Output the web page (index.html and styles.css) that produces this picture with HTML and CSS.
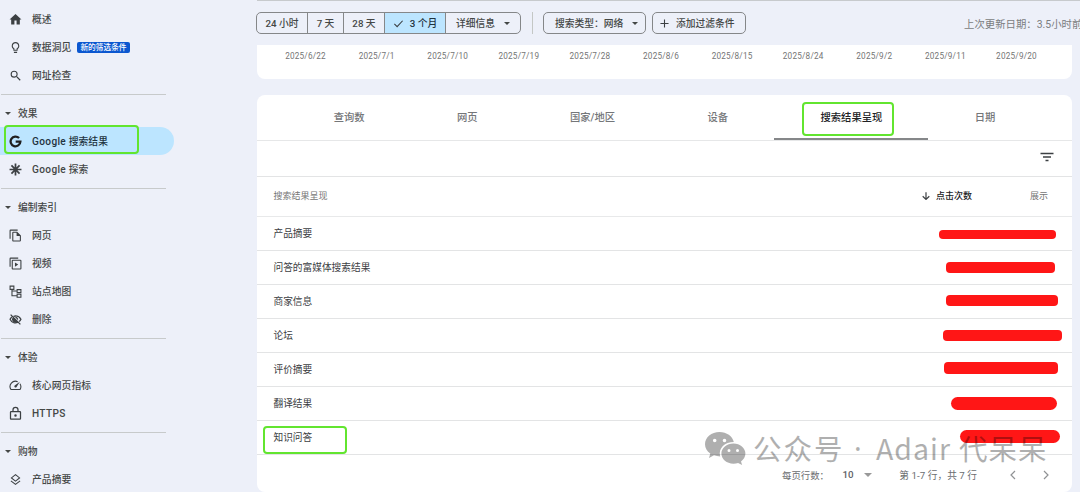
FILE: index.html
```html
<!DOCTYPE html>
<html lang="zh-CN">
<head>
    <meta charset="UTF-8">
    <meta name="viewport" content="width=device-width, initial-scale=1.0">
    <title>Search Console</title>
    <link rel="stylesheet" href="styles.css">
</head>
<body>
    <nav class="sidebar">
        <div class="nav-group">
            <a class="nav-item"><svg class="icon" viewBox="0 0 24 24"><path d="M10 21v-7h4v7h6v-9h3L12 2 1 12h3v9z"/></svg>概述</a>
            <a class="nav-item"><svg class="icon" viewBox="0 0 24 24"><path d="M9 21c0 .55.45 1 1 1h4c.55 0 1-.45 1-1v-1H9v1zm3-19C8.14 2 5 5.14 5 9c0 2.38 1.19 4.47 3 5.74V17c0 .55.45 1 1 1h6c.55 0 1-.45 1-1v-2.26c1.81-1.27 3-3.36 3-5.74 0-3.86-3.14-7-7-7zm2.85 11.1l-.85.6V16h-4v-2.3l-.85-.6A4.997 4.997 0 0 1 7 9c0-2.76 2.24-5 5-5s5 2.24 5 5c0 1.63-.8 3.16-2.15 4.1z"/></svg>数据洞见<span class="badge">新的筛选条件</span></a>
            <a class="nav-item"><svg class="icon" viewBox="0 0 24 24"><path d="M15.5 14h-.79l-.28-.27A6.47 6.47 0 0 0 16 9.5 6.5 6.5 0 1 0 9.5 16c1.61 0 3.09-.59 4.23-1.57l.27.28v.79l6 6L21.5 20l-6-6zm-6 0a4.5 4.5 0 1 1 0-9 4.5 4.5 0 0 1 0 9z"/></svg>网址检查</a>
        </div>
        <div class="nav-group">
            <div class="nav-title">效果</div>
            <a class="nav-item active"><svg class="icon" viewBox="0 0 24 24"><path class="line thick" d="M18.6 5.7A9 9 0 1 0 21 12.3h-8.7"/></svg><span><span class="latin">Google</span> 搜索结果</span></a>
            <a class="nav-item"><svg class="icon" viewBox="0 0 24 24"><path class="line spokes" d="M12 1v22M1 12h22M4.500 4.500l15 15M19.500 4.500l-15 15"/></svg><span><span class="latin">Google</span> 探索</span></a>
        </div>
        <div class="nav-group">
            <div class="nav-title">编制索引</div>
            <a class="nav-item"><svg class="icon" viewBox="0 0 24 24"><path d="M16 1H3a2 2 0 0 0-2 2v15h2V3h13V1zm-1 4H8a2 2 0 0 0-2 2v14c0 1.100.9 2 2 2h12a2 2 0 0 0 2-2V12l-7-7zM8 21V7h6v6h6v8H8z"/></svg>网页</a>
            <a class="nav-item"><svg class="icon" viewBox="0 0 24 24"><path d="M17 1H3a2 2 0 0 0-2 2v15h2V3h14V1zm4 4H7a2 2 0 0 0-2 2v14c0 1.100.9 2 2 2h14a2 2 0 0 0 2-2V7a2 2 0 0 0-2-2zm0 16H7V7h14v14zM11 10v8l6-4z"/></svg>视频</a>
            <a class="nav-item"><svg class="icon" viewBox="0 0 24 24"><path class="line" d="M2 2h7v6H2zM15 8.500h7v5.500h-7zM15 17h7v5.500h-7zM5.500 8v11.700H15M5.500 11.200H15"/></svg>站点地图</a>
            <a class="nav-item"><svg class="icon" viewBox="0 0 24 24"><path class="line eye" d="M3 3l18 18M8.500 6.200C14 4 19.500 6.500 22 11.500c-.8 1.700-2 3.200-3.400 4.300M5.200 7.200C3.800 8.300 2.700 9.800 2 11.500c2.700 5.500 8.500 8 14 6"/><path d="M7.500 8A5.500 5.500 0 0 0 15.700 16zM10.500 7l6.200 6.200A5 5 0 0 0 10.500 7z"/></svg>删除</a>
        </div>
        <div class="nav-group">
            <div class="nav-title">体验</div>
            <a class="nav-item"><svg class="icon" viewBox="0 0 24 24"><path class="line" d="M16 4.900A10 10 0 0 0 3.600 19.500h16.800A10 10 0 0 0 20.200 8.800"/><path d="M20 5l-6.300 10a2.200 2.200 0 0 1-3.200-3.200z"/></svg>核心网页指标</a>
            <a class="nav-item"><svg class="icon lock" viewBox="0 0 24 24"><path d="M18 8h-1V6A5 5 0 0 0 7 6v2H5a2 2 0 0 0-2 2v10c0 1.100.9 2 2 2h14a2 2 0 0 0 2-2V10a2 2 0 0 0-2-2zM9 6a3 3 0 0 1 6 0v2H9V6zm10 14H5V10h14v10zm-7-3a2 2 0 1 0 0-4 2 2 0 0 0 0 4z"/></svg><span class="latin">HTTPS</span></a>
        </div>
        <div class="nav-group">
            <div class="nav-title">购物</div>
            <a class="nav-item"><svg class="icon" viewBox="0 0 24 24"><path class="line" d="M12 3l7.500 6-7.500 6-7.500-6zM3.500 14.500L12 21l8.500-6.500"/></svg>产品摘要</a>
        </div>
        <div class="mark mark-nav"></div>
    </nav>

    <main class="content">
        <div class="toolbar">
            <div class="segments">
                <span class="seg seg-24h">24 小时</span>
                <span class="seg seg-7d">7 天</span>
                <span class="seg seg-28d">28 天</span>
                <span class="seg seg-3m selected"><svg class="check" viewBox="0 0 12 12"><path d="M1.500 6.500l3 3 6-6.500"/></svg>3 个月</span>
                <span class="seg seg-more">详细信息<i class="caret"></i></span>
            </div>
            <div class="separator"></div>
            <div class="chip chip-type">搜索类型：网络<i class="caret"></i></div>
            <div class="chip chip-add"><svg class="plus" viewBox="0 0 10 10"><path d="M5 .5v9M.5 5h9"/></svg>添加过滤条件</div>
            <div class="updated">上次更新日期：3.5小时前</div>
        </div>

        <div class="chart">
            <span>2025/6/22</span>
            <span>2025/7/1</span>
            <span>2025/7/10</span>
            <span>2025/7/19</span>
            <span>2025/7/28</span>
            <span>2025/8/6</span>
            <span>2025/8/15</span>
            <span>2025/8/24</span>
            <span>2025/9/2</span>
            <span>2025/9/11</span>
            <span>2025/9/20</span>
        </div>

        <div class="card">
            <div class="tabs">
                <span class="tab">查询数</span>
                <span class="tab">网页</span>
                <span class="tab">国家/地区</span>
                <span class="tab">设备</span>
                <span class="tab current">搜索结果呈现<i class="mark mark-tab"></i></span>
                <span class="tab">日期</span>
            </div>
            <div class="filter-row">
                <svg class="filter" viewBox="0 0 14 10"><path d="M.5 1.500h13M3 5h8M5.500 8.500h3"/></svg>
            </div>
            <div class="table-head">
                <span class="col-name">搜索结果呈现</span>
                <svg class="arrow" viewBox="0 0 8 8"><path d="M4 .3v7M.7 4.200L4 7.400l3.300-3.200"/></svg>
                <span class="col-clicks">点击次数</span>
                <span class="col-views">展示</span>
            </div>
            <div class="row">产品摘要<i class="redact r1"></i></div>
            <div class="row">问答的富媒体搜索结果<i class="redact r2"></i></div>
            <div class="row">商家信息<i class="redact r3"></i></div>
            <div class="row">论坛<i class="redact r4"></i></div>
            <div class="row">评价摘要<i class="redact r5"></i></div>
            <div class="row">翻译结果<i class="redact r6"></i></div>
            <div class="row">知识问答<i class="redact r7"></i><i class="mark mark-row"></i></div>
            <div class="pager">
                <span class="per-page">每页行数：</span>
                <span class="count">10</span>
                <i class="caret caret-lg"></i>
                <span class="range">第 1-7 行，共 7 行</span>
                <svg class="chev" viewBox="0 0 6 10"><path d="M5 1L1 5l4 4"/></svg>
                <svg class="chev" viewBox="0 0 6 10"><path d="M1 1l4 4-4 4"/></svg>
            </div>
        </div>
    </main>

    <div class="watermark">
        <svg class="wechat" viewBox="0 0 41 34">
            <path fill-rule="evenodd" d="M14.500 0C6.500 0 0 5.400 0 12.200c0 3.900 2.100 7.200 5.300 9.400L4 26l5-2.700c1.900.7 4 1.100 6.200 1.100C13 16 20 10 28.800 10 27.600 4.200 21.600 0 14.500 0zM9.700 6.700a1.800 1.800 0 1 1 0 3.600 1.800 1.800 0 0 1 0-3.600zm9.800 0a1.800 1.800 0 1 1 0 3.600 1.800 1.800 0 0 1 0-3.600z"/>
            <path fill-rule="evenodd" d="M28.400 11.500c-6.700 0-12 4.500-12 10.100s5.300 10.100 12 10.100c1.700 0 3.300-.3 4.700-.8l4 2.200-1.100-3.600c2.700-1.900 4.400-4.700 4.400-7.900 0-5.600-5.300-10.100-12-10.100zM24 17.100a1.500 1.500 0 1 1 0 3 1.500 1.500 0 0 1 0-3zm8.500 0a1.500 1.500 0 1 1 0 3 1.500 1.500 0 0 1 0-3z"/>
        </svg>
        <span class="wm-label">公众号</span>
        <span class="wm-dot">·</span>
        <span class="wm-name">Adair</span>
        <span class="wm-cjk">代呆呆</span>
    </div>
</body>
</html>
```

FILE: styles.css
```css
* {
    box-sizing: border-box;
}
body {
    margin: 0;
    width: 1080px;
    height: 492px;
    overflow: hidden;
    position: relative;
    display: flex;
    background: #edf0f9;
    color: #444746;
    font-family: Roboto, "Noto Sans CJK SC", sans-serif;
    font-size: 9.75px;
    white-space: nowrap;
}
svg {
    display: block;
    flex: none;
}

/* sidebar */
.sidebar {
    position: relative;
    width: 257px;
    flex: none;
    padding-top: 5px;
    font-weight: 500;
}
.nav-group + .nav-group::before {
    content: "";
    display: block;
    width: 165px;
    height: 1px;
    margin: 5px 0 4px 1px;
    background: #c7cacb;
}
.nav-item {
    display: flex;
    align-items: center;
    width: 174px;
    height: 28px;
    padding-left: 9px;
    letter-spacing: 0.1px;
}
.nav-item.active {
    background: #bce5ff;
    border-radius: 0 14px 14px 0;
    color: #1f3340;
}
.nav-title {
    display: flex;
    align-items: center;
    height: 28px;
    padding-left: 5px;
}
.nav-title::before {
    content: "";
    border: 3px solid transparent;
    border-top-color: #444746;
    border-bottom: 0;
    margin-right: 7px;
}
.latin {
    font-size: 10.1px;
    letter-spacing: 0.35px;
}
.icon {
    width: 13px;
    height: 13px;
    margin-right: 10px;
    fill: #3c4043;
}
.icon.lock {
    width: 15px;
    height: 15px;
    margin: 0 9px 0 -1px;
}
.icon .line {
    fill: none;
    stroke: #3c4043;
    stroke-width: 2;
}
.icon .eye {
    stroke-width: 2.4;
}
.icon .spokes {
    stroke-width: 3.2;
}
.icon .thick {
    stroke: #1f1f1f;
    stroke-width: 4.2;
}
.badge {
    margin-left: 6px;
    height: 11px;
    padding: 0 3px;
    border-radius: 2px;
    background: #0b57d0;
    color: #fff;
    font-size: 7.7px;
    line-height: 11px;
    letter-spacing: 0;
}

/* toolbar */
.content {
    width: 823px;
    flex: none;
    border-top: 1px solid #c7cacd;
}
.toolbar {
    display: flex;
    align-items: center;
    height: 44px;
    font-weight: 500;
}
.toolbar > div {
    flex: none;
}
.segments {
    display: flex;
    width: 265px;
    height: 22px;
    margin-left: -1px;
    border: 1px solid #858789;
    border-radius: 5px;
    overflow: hidden;
}
.seg {
    display: flex;
    flex: none;
    align-items: center;
    justify-content: center;
}
.seg + .seg {
    border-left: 1px solid #858789;
}
.seg-24h { width: 50px; }
.seg-7d { width: 36px; }
.seg-28d { width: 41px; }
.seg-3m { width: 61px; }
.seg-more { width: 75px; }
.selected {
    background: #bce5ff;
    color: #1f3340;
}
.check {
    width: 11px;
    height: 11px;
    margin-right: 6px;
}
.check path, .plus path, .arrow path, .chev path, .filter path {
    fill: none;
    stroke: #3c4043;
    stroke-width: 1.2;
}
.filter path {
    stroke-width: 1.5;
}
.caret {
    border: 3px solid transparent;
    border-top-color: #444746;
    border-bottom: 0;
    margin-left: 9px;
}
.separator {
    width: 1px;
    height: 22px;
    margin: 0 10px 0 11px;
    background: #c4c7c5;
}
.chip {
    display: flex;
    align-items: center;
    height: 22px;
    border: 1px solid #858789;
    border-radius: 5px;
}
.chip-type {
    width: 103px;
    padding-left: 11px;
    margin-right: 6px;
}
.chip-add {
    width: 94px;
    padding-left: 7px;
}
.plus {
    width: 9px;
    height: 9px;
    margin-right: 7px;
}
.updated {
    margin-left: 218px;
    color: #7b7d80;
    font-size: 10.4px;
    font-weight: 400;
}

/* chart axis */
.chart {
    display: flex;
    width: 815px;
    height: 34px;
    padding: 6px 0 0 13px;
    border-radius: 0 0 8px 8px;
    background: #fff;
    color: #757575;
    font-size: 8.2px;
    line-height: 11px;
    letter-spacing: 0.2px;
}
.chart span {
    width: 71.1px;
    text-align: center;
}

/* table card */
.card {
    width: 815px;
    height: 397px;
    margin-top: 16px;
    border-radius: 8px;
    background: #fff;
}
.tabs {
    display: flex;
    justify-content: center;
    height: 46px;
    border-bottom: 1px solid #e6e7e8;
    color: #747679;
    font-size: 10.3px;
    font-weight: 500;
}
.tab {
    position: relative;
    padding: 0 46.2px;
    line-height: 45px;
}
.tab.current {
    height: 45px;
    color: #202124;
    border-bottom: 2px solid #858789;
}
.filter-row {
    display: flex;
    align-items: center;
    justify-content: flex-end;
    height: 36px;
    padding-right: 18px;
    border-bottom: 1px solid #e3e4e5;
}
.filter {
    width: 14px;
    height: 10px;
    margin-bottom: 4px;
}
.table-head {
    display: flex;
    align-items: center;
    height: 40px;
    padding: 0 24px 2px 16.5px;
    border-bottom: 1px solid #e8e9ea;
    color: #757575;
    font-size: 9px;
}
.col-name {
    flex: 1;
}
.arrow {
    width: 8px;
    height: 8px;
    margin-right: 6px;
}
.col-clicks {
    color: #202124;
    font-weight: 500;
    margin-right: 58px;
}
.row {
    position: relative;
    height: 34px;
    padding-left: 16.5px;
    border-bottom: 1px solid #e3e4e5;
    color: #3c4043;
    font-size: 9.7px;
    line-height: 33px;
}

/* hidden values */
.redact {
    position: absolute;
    background: #ff1616;
    border-radius: 4px;
}
.r1 { left: 682px; top: 13px; width: 117px; height: 9px; }
.r2 { left: 689px; top: 11px; width: 109px; height: 11px; }
.r3 { left: 689px; top: 9.500px; width: 112px; height: 11.500px; }
.r4 { left: 686px; top: 11px; width: 119px; height: 11px; }
.r5 { left: 687px; top: 9px; width: 114px; height: 12px; }
.r6 { left: 694px; top: 10px; width: 106px; height: 13px; border-radius: 7px; }
.r7 { left: 703px; top: 9px; width: 100px; height: 13px; border-radius: 7px; }

/* green highlights */
.mark {
    position: absolute;
    border: 2px solid #62e52f;
    border-radius: 4px;
}
.mark-nav { left: 4px; top: 125px; width: 135px; height: 29px; }
.mark-tab { left: 28px; top: 7px; width: 92px; height: 34px; }
.mark-row { left: 6px; top: 5px; width: 84px; height: 28px; }

.pager {
    display: flex;
    align-items: center;
    height: 39px;
    padding-left: 525px;
    color: #6b6d70;
    font-size: 9.7px;
}
.per-page {
    width: 63px;
    font-size: 9.4px;
}
.count {
    width: 22px;
    margin-right: 2px;
    font-weight: 500;
    font-size: 9.8px;
    color: #5f6368;
}
.caret-lg {
    margin: 0 26px 0 0;
    border-width: 4px;
    border-bottom: 0;
    border-top-color: #999;
}
.range {
    width: 114px;
    letter-spacing: 0.05px;
}
.pager .count, .pager .range {
    position: relative;
    left: 1px;
}
.chev {
    width: 6px;
    height: 10px;
    margin-left: 4px;
    margin-right: 23px;
}
.chev path {
    stroke: #909294;
}

/* account watermark */
.watermark {
    position: absolute;
    left: 705px;
    top: 432px;
    height: 34px;
    display: flex;
    align-items: center;
    opacity: 0.31;
    color: #000;
    font-family: "Noto Sans CJK SC", sans-serif;
    font-size: 28.5px;
    line-height: 34px;
}
.watermark span {
    margin-top: -3px;
}
.wechat {
    width: 41px;
    height: 34px;
    margin-right: 7px;
}
.wm-label { width: 98px; letter-spacing: 2px; }
/* latin middle dot, half the width of the CJK one */
.wm-dot { width: 25px; padding-left: 3px; font-family: "Noto Sans", sans-serif; }
.wm-name { width: 83px; letter-spacing: 1px; }
.wm-cjk { letter-spacing: 1px; }
```
